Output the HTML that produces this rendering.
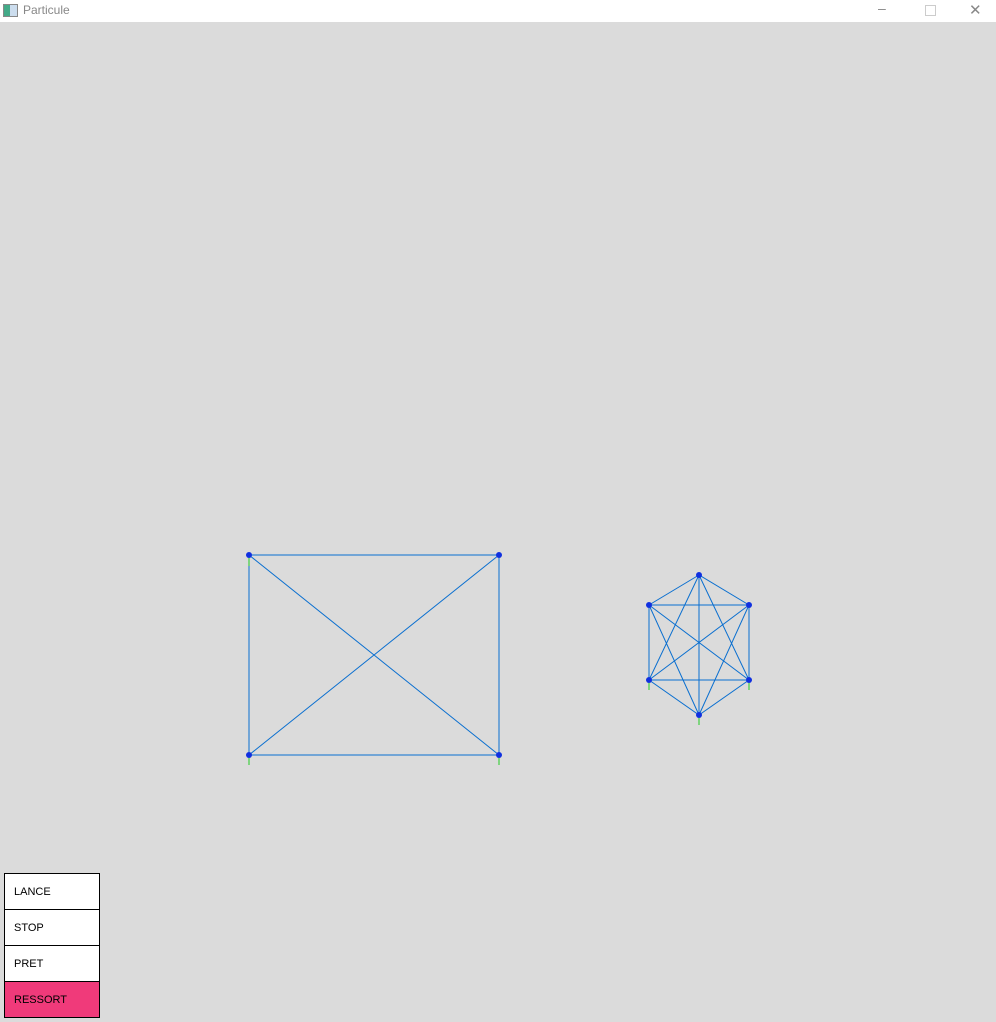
<html><head><style>
body{margin:0;width:996px;height:1022px;background:#dbdbdb;position:relative;overflow:hidden;font-family:"Liberation Sans",sans-serif}
.tb{position:absolute;left:0;top:0;width:996px;height:22px;background:#fff;font-size:12px;color:#888}
.b{position:absolute;left:4px;width:94px;height:35px;border:1px solid #000;background:#fff;font-size:11px;line-height:36px;text-indent:9px;color:#000}
</style></head><body>
<div class="tb"><div style="position:absolute;left:3px;top:4px;width:13px;height:11px;border:1px solid #888;background:linear-gradient(90deg,#4a8 0 45%,#cde 45%)"></div><span style="position:absolute;left:23px;top:3px">Particule</span>
<span style="position:absolute;left:878px;top:0;font-size:14px">–</span>
<div style="position:absolute;left:925px;top:5px;width:9px;height:9px;border:1px solid #ccc"></div>
<span style="position:absolute;left:969px;top:1px;font-size:15px">✕</span></div>
<svg width="996" height="1022" style="position:absolute;left:0;top:0">
<g stroke="#0a6fd0" stroke-width="1" fill="none">
<path d="M249 555H499V755H249Z M249 555L499 755 M499 555L249 755"/>
<path d="M699 575L649 605L649 680L699 715L749 680L749 605Z M649 605H749 M649 680H749 M699 575V715 M699 575L649 680 M699 575L749 680 M649 605L749 680 M749 605L649 680 M649 605L699 715 M749 605L699 715"/>
</g>
<g stroke="#2c2" stroke-width="1"><path d="M249 556v10 M249 755v10 M499 755v10 M649 680v10 M749 680v10 M699 715v10"/></g>
<g fill="#1030e0"><circle cx="249" cy="555" r="3"/><circle cx="499" cy="555" r="3"/><circle cx="249" cy="755" r="3"/><circle cx="499" cy="755" r="3"/><circle cx="699" cy="575" r="3"/><circle cx="649" cy="605" r="3"/><circle cx="749" cy="605" r="3"/><circle cx="649" cy="680" r="3"/><circle cx="749" cy="680" r="3"/><circle cx="699" cy="715" r="3"/></g>
</svg>
<div class="b" style="top:873px">LANCE</div>
<div class="b" style="top:909px">STOP</div>
<div class="b" style="top:945px">PRET</div>
<div class="b" style="top:981px;background:#f03a7a">RESSORT</div>
</body></html>
